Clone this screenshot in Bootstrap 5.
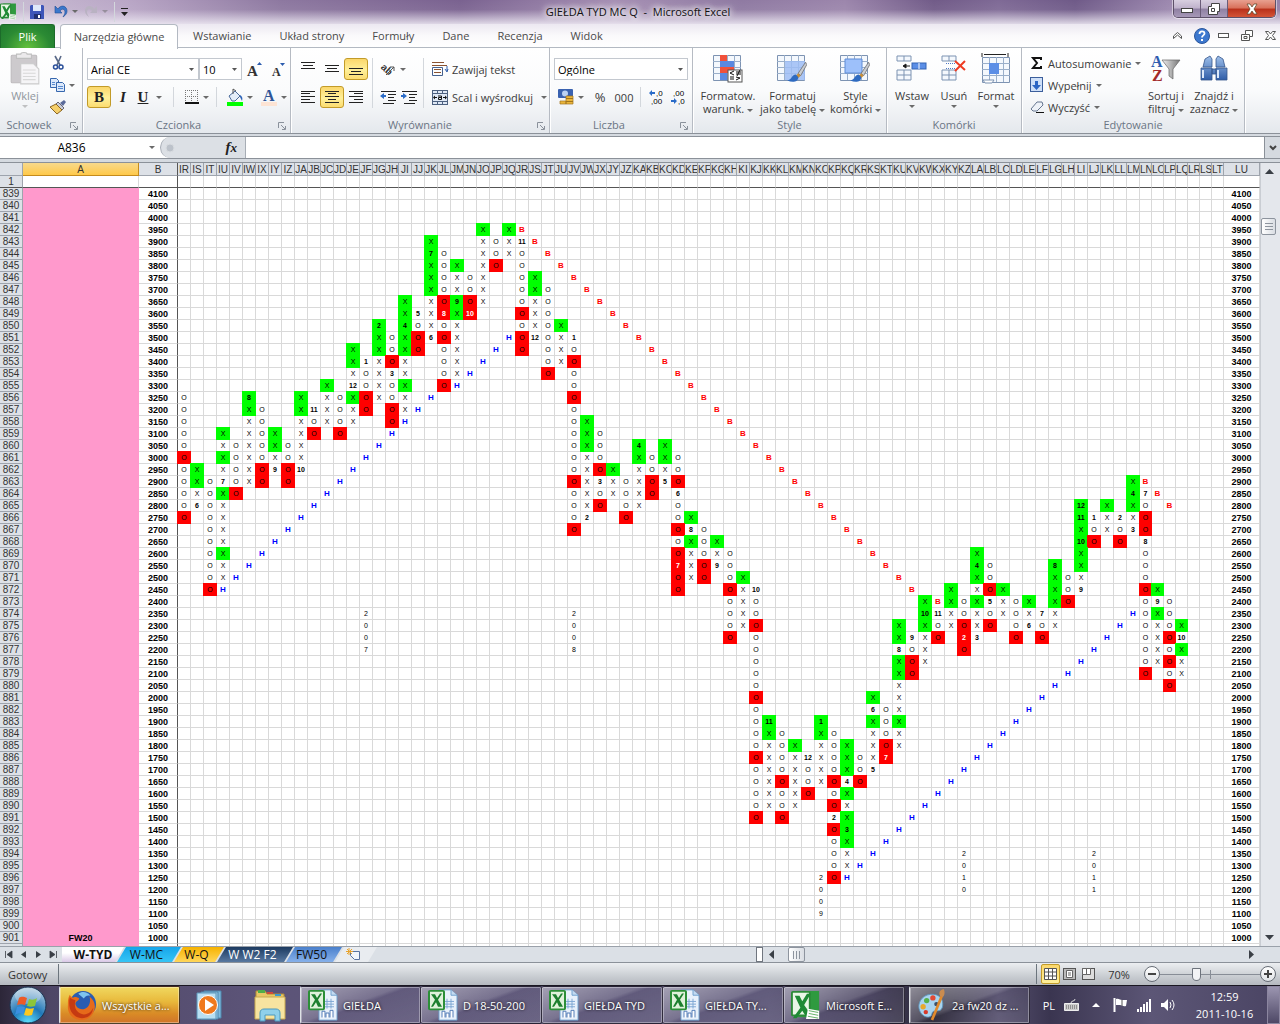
<!DOCTYPE html>
<html lang="pl">
<head>
<meta charset="utf-8">
<meta name="viewport" content="width=device-width, initial-scale=1">
<title>GIEŁDA TYD MC Q - Microsoft Excel</title>
<link href="https://cdn.jsdelivr.net/npm/bootstrap@5.3.0/dist/css/bootstrap.min.css" rel="stylesheet">
<style>
html,body{height:100%}
body{font-family:"Open Sans","Noto Sans",sans-serif;font-size:11px;line-height:13px;color:#3b3b3b;background:#dfe3e8;overflow:hidden}
svg{display:block;flex:none;overflow:visible}
button,select,input{font-family:inherit;font-size:inherit;line-height:inherit;color:inherit}
.xl-app{height:100vh}
/* title bar */
.titlebar{height:24px;background:linear-gradient(180deg,rgba(255,255,255,0) 0,rgba(255,255,255,.05) 40%,rgba(240,236,245,.85) 100%),linear-gradient(90deg,#c9bdd3 0,#b9a6c6 10%,#8d78a0 22%,#7a6290 36%,#a690b4 48%,#8f7aa2 58%,#9c86ac 66%,#715b88 73%,#7f6a96 78%,#6f5a88 84%,#a08cb2 92%,#9480a8 100%)}
.edge{flex-basis:0}
.qat{height:23px;gap:6px}
.titletext{padding-top:5px;color:#111;text-shadow:0 0 6px #fff,0 0 6px #fff,0 0 10px #fff}
.winbtns{border:1px solid #5d5068;border-top:0;border-radius:0 0 5px 5px;overflow:hidden;height:18px;box-shadow:0 0 0 1px rgba(255,255,255,.5)}
.winbtns button{border:0;border-right:1px solid #6a5c78;height:18px;width:27px;padding:0;background:linear-gradient(180deg,#d8cfe0 0,#bfb2cb 45%,#8f80a2 50%,#a99bba 100%)}
.winbtns .xclose{width:47px;border-right:0;background:linear-gradient(180deg,#e8a090 0,#d8705a 45%,#b8301a 50%,#d8583a 100%)}
/* ribbon tabs */
.tabrow{height:24px;background:linear-gradient(180deg,#ece8f1 0,#faf9fb 50%,#fff 100%);border-bottom:1px solid #b3b9c2}
.tabrow button{border:0;background:transparent;padding:0;color:#4a4a4a}
.tabrow .filetab{width:55px;height:24px;color:#fff;border:1px solid #1c6b2a;border-bottom:0;border-radius:3px 3px 0 0;background:radial-gradient(ellipse at 50% 100%,#64c13d 0,#2b8a34 60%,#1f7a2e 100%)}
.tabrow .hometab{margin-left:5px;width:118px;height:25px;margin-bottom:-1px;border:1px solid #b3b9c2;border-bottom:0;border-radius:4px 4px 0 0;background:#fff}
.tabnames{gap:28px;padding-left:15px}
/* ribbon */
.ribbon{height:86px;background:linear-gradient(180deg,#fff 0,#fafbfc 50%,#e9ecf0 90%,#e4e8ed 100%);border-bottom:1px solid #8b9199}
.grp{border-right:1px solid #b6bbc3;box-shadow:1px 0 0 #fff;height:85px;flex:none}
.grp-name{height:15px;color:#6b7584;text-align:center;position:relative;line-height:13px}
.corner{position:absolute;right:4px;top:4px;width:8px;height:8px}
.rb{border:0;background:transparent;padding:0;display:inline-flex;align-items:center;justify-content:center;height:22px;gap:4px;white-space:nowrap;border-radius:3px;flex:none}
.rb.on{border:1px solid #c29b29;background:linear-gradient(180deg,#fbd76b,#fff09a 55%,#fbdc70)}
.w16{width:16px}.w21{width:21px}.w24{width:24px}.w30{width:30px}
.serifb{font:bold 15px "Liberation Serif",serif;color:#222}
.vsep{width:1px;height:20px;background:#d3d7dc;flex:none}
.vsep.tall{height:50px}
.dn{width:0;height:0;border:3px solid transparent;border-top-color:#6a6a6a;border-bottom:0;flex:none;display:inline-block;vertical-align:middle}
.combo{appearance:none;border:1px solid #c3c8cf;border-radius:0;height:22px;padding:0 3px;color:#000;background:url("data:image/svg+xml,%3Csvg xmlns='http://www.w3.org/2000/svg' width='5' height='3'%3E%3Cpath d='M0 0h5L2.5 3z' fill='%23555'/%3E%3C/svg%3E") right 4px center no-repeat,#fff}
.big{border:0;background:transparent;padding:0;display:flex;flex-direction:column;align-items:center;text-align:center;gap:3px;flex:none;white-space:nowrap}
.big svg{height:34px}
.ctl{gap:6px;padding:10px 0 0 4px}
/* formula bar */
.fbar{height:28px;padding-top:2px;background:#d5dae0}
.fbar>div{height:23px;border-top:1px solid #8b9199;border-bottom:1px solid #8b9199;background:#fff}
.namebox{border:0;width:143px;text-align:center;font-size:12px;color:#000;background:#fff;padding:0}
.fxzone{width:86px;background:#dce0e5;border:1px solid #a7adb5;border-width:0 1px;border-radius:11px 0 0 11px}
.fxin{border:0;outline:0;background:#fff;min-width:0}
/* sheet */
.sheetwrap{min-height:0;overflow:hidden;border-top:1px solid #8b9199;background:#fff}
.sheetbox{min-width:0;overflow:hidden}
.cells{table-layout:fixed;width:100%;border-collapse:separate;border-spacing:0;font-family:"Liberation Sans",Arial,sans-serif;color:#000}
.cells tr{height:12px}
.cells th,.cells td{height:12px;padding:1px 0 0;border:0 solid #d9d9d9;border-width:0 1px 1px 0;overflow:hidden;white-space:nowrap;text-align:center;font-size:7px;line-height:10px;vertical-align:middle}
.cells thead th{font-size:10px;font-weight:400;height:13px;line-height:11px;color:#333;background:#dde1e7;border-color:#9ea4ad}
.cells th.pick{background:linear-gradient(180deg,#f8d98c,#ffc94a);border-color:#c58b1c}
.cells tbody th{font-size:10px;font-weight:400;color:#333;background:#dde1e7;border-color:#9ea4ad}
.cells .frz td,.cells .frz th{border-bottom-color:#555}
.cells .cb{border-right-color:#555}
.cells td.price{font-size:9px;font-weight:700}
.cells td.pinkcol{background:#ff99cc;border-color:#ff99cc;font-size:9px;font-weight:700}
.cells td.up{background:#0f0;border-color:#0f0;box-shadow:-1px -1px 0 #0f0,-1px 0 0 #0f0,0 -1px 0 #0f0}
.cells td.down{background:#f00;border-color:#f00;box-shadow:-1px -1px 0 #f00,-1px 0 0 #f00,0 -1px 0 #f00}
.cells td.num{font-weight:700}
.cells td.down.num{color:#fff}
.cells td.lineB{color:#f00;font-weight:700;font-size:8px}
.cells td.lineH{color:#00f;font-weight:700;font-size:8px}
.vscroll{width:20px;background:#e4e7ec;border-left:1px solid #c9cdd3;flex:none;padding-right:4px}
.vgap{height:38px}
.sbtn{border:0;background:transparent;padding:0;display:flex;align-items:center;justify-content:center;flex:none}
.sq{width:17px;height:17px}
.thumb{border:1px solid #8d949e;border-radius:2px;background:linear-gradient(90deg,#fff,#d9dde3);padding:0;display:flex;align-items:center;justify-content:center;flex:none}
/* sheet tabs */
.botrow{height:17px;background:#dbe0e6;border-top:1px solid #9aa1aa;flex:none;border-bottom:1px solid #8b9199}
.tabnav{width:62px;padding:0 5px}
.stab{border:0;height:15px;padding:0 5px 0 0;font-size:12px;line-height:15px;color:#111;margin-left:-7px;clip-path:polygon(9px 0,100% 0,calc(100% - 9px) 100%,0 100%);flex:none}
.stab.cur{width:62px;margin-left:0;padding:0;clip-path:polygon(0 0,100% 0,calc(100% - 9px) 100%,0 100%);background:linear-gradient(180deg,#fff 40%,#d9c8e6)}
.t-mc{width:64px;background:linear-gradient(180deg,#16a5ea,#35c5f5)}
.t-q{width:50px;background:linear-gradient(180deg,#f6b200,#ffd65a)}
.t-w2{width:76px;background:linear-gradient(180deg,#1c3a60,#5878a0)}
.t-fw{width:56px;background:linear-gradient(180deg,#4a80cc,#86b0ea)}
.t-new{width:42px;background:#e9ecf0}
.hscroll{width:524px;padding-right:20px}
.splitter{width:7px;height:15px;border:1px solid #70767f;background:#fff}
/* status bar */
.status{height:22px;background:linear-gradient(180deg,#eceef1,#c9cdd2 60%,#b5b9bf);flex:none;color:#333}
.ready{width:58px}
.vbtn{border:0;background:transparent;width:19px;height:20px;padding:0;display:flex;align-items:center;justify-content:center}
.vbtn.on{border:1px solid #c29b29;border-radius:2px;background:linear-gradient(180deg,#fbd76b,#fff09a)}
.pct{width:42px}
.round{width:16px;height:16px;border-radius:8px;border:1px solid #666c75;background:linear-gradient(180deg,#fff,#dfe2e6);padding:0;display:flex;align-items:center;justify-content:center;flex:none}
.zoomer{appearance:none;width:100px;height:16px;background:linear-gradient(#878d96,#878d96) center/100% 1px no-repeat,linear-gradient(#878d96,#878d96) 50% center/1px 9px no-repeat;margin:0}
.zoomer::-webkit-slider-thumb{appearance:none;width:9px;height:13px;border:1px solid #6d737c;background:#f2f3f5;border-radius:1px 1px 5px 5px}
/* taskbar */
.taskbar{height:39px;flex:none;border-top:1px solid #1a1722;color:#fff;background:linear-gradient(90deg,#2c2638 0,#4e4666 4%,#5c5478 20%,#5b5577 60%,#453f5c 68%,#2b2838 73%,#57516f 78%,#3a3550 82%,#5c5676 90%,#4a4463 100%)}
.task{width:121px;height:38px;border:1px solid rgba(20,16,30,.75);border-left-width:0;border-radius:2px;box-shadow:inset 0 0 0 1px rgba(255,255,255,.35);background:linear-gradient(160deg,rgba(255,255,255,.45) 0,rgba(255,255,255,.18) 45%,rgba(255,255,255,.04) 50%,rgba(255,255,255,.1) 100%);color:#fff;padding:0 4px 0 7px;display:flex;align-items:center;gap:5px;white-space:nowrap;overflow:hidden;flex:none}
.task svg{width:30px;height:32px}
.task span{text-shadow:0 0 3px #000}
.task.fox{background:linear-gradient(180deg,#f0d860 0,#e8b93c 40%,#d98a26 75%,#d0742a 100%)}
.quick{border:0;background:transparent;padding:0;display:flex;align-items:center;justify-content:center;width:60px;flex:none}
.quick.orb{width:55px}
.tray{gap:9px;padding-right:12px}
.clock{width:73px;line-height:17px;margin-right:6px}
.desk{width:13px;height:38px;border:1px solid #8c86a0;background:linear-gradient(180deg,#9b95b0,#4e4866);padding:0;flex:none}
</style>
<script src="https://cdn.jsdelivr.net/npm/bootstrap@5.3.0/dist/js/bootstrap.bundle.min.js"></script>
</head>
<body>
<svg width="0" height="0" class="position-absolute" aria-hidden="true">
 <defs>
  <linearGradient id="gNavy" x1="0" y1="0" x2="0" y2="1"><stop offset="0" stop-color="#9fc0ea"/><stop offset="1" stop-color="#2f5da8"/></linearGradient>
  <linearGradient id="gSteel"><stop offset="0" stop-color="#eee"/><stop offset="1" stop-color="#777"/></linearGradient>
  <radialGradient id="gOrb" cx=".5" cy="1" r="1"><stop offset="0" stop-color="#5fe3ff"/><stop offset=".45" stop-color="#1f78b8"/><stop offset="1" stop-color="#b8cfe2"/></radialGradient>
  <symbol id="xlbig" viewBox="0 0 32 32"><rect x="6" y="1" width="24" height="28" fill="#2f9a3f"/><rect x="1" y="2" width="19" height="25" rx="1" fill="#e9f6e6" stroke="#2c8a38" stroke-width="2"/><path d="M4 6h5l3 6 5-8h4l-7 12 10 14h-7l-5-8-6 8H2l8-11z" fill="#1f8a35"/><path d="M18 20l12 2v9H16z" fill="#fff"/><path d="M19 22l10 2M19 25l10 2M18 28l11 2" stroke="#5fae62"/></symbol>
  <symbol id="xldoc" viewBox="0 0 30 36" preserveAspectRatio="none"><path d="M11 1h12l6 6v28H11z" fill="#e8f1fb" stroke="#6d9fce"/><path d="M23 1v6h6" fill="#c4daf0" stroke="#6d9fce"/><path d="M15 14h11M15 17h11M15 20h11M19 11v11M23 11v11" stroke="#7ba6d2"/><path d="M14 32V25h3v7M18 32v-5h3v5M22 32v-8h3v8" stroke="#4a76b4" fill="#fff"/><rect x="1" y="2" width="15" height="21" rx="1" fill="#dff2da" stroke="#2c8f38" stroke-width="2"/><path d="M3 6h4l2 4 3-5h2l-4 7 4 8h-4l-2-5-3 5H3l4-8z" fill="#1c7f2e"/></symbol>
  <symbol id="brush" viewBox="0 0 16 18"><path d="M15 1l-6 9 2 2 5-9z" fill="#c8ccd2" stroke="#666"  stroke-width=".6"/><path d="M9 10l2 2-2 2-2-2z" fill="#c9903a"/><path d="M7 11c-3 0-3 4-7 5 5 2 9 1 9-3z" fill="#2e6ac0"/></symbol>
  <symbol id="grid28" viewBox="0 0 28 28"><path d="M.5.5h27v25H.5z" fill="#f4f8fd" stroke="#7d93b2"/><path d="M7.500 0v25M14.500 0v25M21.500 0v25M0 6.500h28M0 12.500h28M0 18.500h28" stroke="#9aafca" fill="none"/></symbol>
 </defs>
</svg>
<div class="xl-app d-flex flex-column">
 <header>
  <div class="titlebar d-flex align-items-start">
   <div class="qat d-flex align-items-center flex-grow-1 edge">
    <svg width="17" height="17" viewBox="0 0 32 32" aria-label="Excel"><use href="#xlbig"/></svg>
    <span class="vsep"></span>
    <button class="sbtn" aria-label="Zapisz"><svg width="14" height="14" viewBox="0 0 14 14"><path d="M1 0h12l1 1v13H0V1z" fill="#3d55b8"/><path d="M3 0h8v6H3z" fill="#dfe8fa"/><path d="M4 9h7v5H4z" fill="#1f2f70"/><path d="M8 10h2v3H8z" fill="#fff"/></svg></button>
    <button class="sbtn gap-1 ms-1" aria-label="Cofnij"><svg width="14" height="13" viewBox="0 0 14 13"><path d="M1 1v7h7L6 6c2-3 5-2 5 1 0 2-1 3-2 5 3-2 4-4 4-6C13 1 7-1 4 4z" fill="#3b78cc" stroke="#1e4c94" stroke-width=".6"/></svg><i class="dn"></i></button>
    <button class="sbtn gap-1" aria-label="Ponów"><svg width="14" height="13" viewBox="0 0 14 13"><path d="M13 1v7H6l2-2C6 3 3 4 3 7c0 2 1 3 2 5C2 10 1 8 1 6c0-5 6-7 9-2z" fill="#b9b2c2"/></svg><i class="dn opacity-50"></i></button>
    <span class="vsep"></span>
    <svg width="7" height="8" viewBox="0 0 7 8" aria-hidden="true"><path d="M0 .5h7" stroke="#222"/><path d="M0 4h7L3.500 8z" fill="#222"/></svg>
   </div>
   <div class="titletext">GIEŁDA TYD MC Q &nbsp;-&nbsp; Microsoft Excel</div>
   <div class="d-flex justify-content-end flex-grow-1 pe-1 edge">
    <div class="winbtns d-flex">
     <button aria-label="Minimalizuj"><svg class="mx-auto" width="12" height="8"><rect x=".5" y="3.500" width="11" height="4" fill="#fff" stroke="#444"/></svg></button>
     <button aria-label="Przywróć"><svg class="mx-auto" width="12" height="12"><path d="M3.500.5h8v8h-2v3h-9v-8h3z" fill="#fff" stroke="#444"/><path d="M3.500 5.500h3v3h-3z" fill="none" stroke="#444"/></svg></button>
     <button class="xclose" aria-label="Zamknij"><svg class="mx-auto" width="12" height="10"><path d="M1 0h3l2 3 2-3h3L8 5l3 5H8L6 7l-2 3H1l3-5z" fill="#fff" stroke="#542" stroke-width=".7"/></svg></button>
    </div>
   </div>
  </div>
  <nav class="tabrow d-flex align-items-center">
   <button class="filetab">Plik</button>
   <button class="hometab">Narzędzia główne</button>
   <div class="tabnames d-flex flex-grow-1">
    <button>Wstawianie</button><button>Układ strony</button><button>Formuły</button><button>Dane</button><button>Recenzja</button><button>Widok</button>
   </div>
   <div class="d-flex align-items-center pe-1 gap-2">
    <button class="sbtn me-1" aria-label="Minimalizuj wstążkę"><svg width="9" height="7" viewBox="0 0 9 7"><path d="M.5 4L4.500.500 8.500 4v2.500L4.500 3 .5 6.500z" fill="#fff" stroke="#555"/></svg></button>
    <button class="sbtn" aria-label="Pomoc"><svg width="16" height="16" viewBox="0 0 16 16"><circle cx="8" cy="8" r="7.500" fill="#3d78cf" stroke="#2b569c"/><path d="M5.500 6c0-3.500 5-3.500 5-.5 0 2-2.500 1.800-2.500 4" fill="none" stroke="#fff" stroke-width="1.800"/><rect x="7" y="11" width="2" height="2" fill="#fff"/></svg></button>
    <button class="sbtn me-1" aria-label="Minimalizuj okno"><svg width="11" height="5"><rect x=".5" y=".5" width="10" height="4" fill="#fff" stroke="#555"/></svg></button>
    <button class="sbtn me-1" aria-label="Przywróć okno"><svg width="12" height="11"><path d="M4.500.5h7v6h-3v4h-8v-6h4z" fill="#fff" stroke="#555"/><path d="M4.500 4.500h4v2M3 6.500h3v2H3z" fill="none" stroke="#555"/></svg></button>
    <button class="sbtn" aria-label="Zamknij okno"><svg width="11" height="9"><path d="M.5.5h3l2 2.500 2-2.500h3L7.500 4.500l3 4h-3l-2-2.500-2 2.500h-3l3-4z" fill="#fff" stroke="#555"/></svg></button>
   </div>
  </nav>
  <div class="ribbon d-flex">
   <section class="grp d-flex flex-column" style="width:83px">
    <div class="d-flex flex-grow-1 ps-1">
     <button class="big text-secondary opacity-75 pt-1" style="width:42px"><svg width="30" height="34" viewBox="0 0 28 32"><rect x="1" y="3" width="24" height="26" rx="1" fill="#bdb9bd" stroke="#a9a5a9"/><path d="M6 2h4c0-2 6-2 6 0h4v4H6z" fill="#e6e4e6" stroke="#aaa"/><path d="M10 11h12l5 5v14H10z" fill="#f4f3f5" stroke="#bbb"/><path d="M12 17h12M12 20h12M12 23h12M12 26h12" stroke="#ccc"/></svg><span>Wklej</span><i class="dn opacity-50"></i></button>
     <div class="d-flex flex-column ps-1 pt-1">
      <button class="rb w16" aria-label="Wytnij"><svg width="11" height="15" viewBox="0 0 11 15"><path d="M2 0l5 9M8 0L4 9" stroke="#5a6a88" stroke-width="1.600"/><circle cx="2.500" cy="11" r="2" fill="none" stroke="#2a4f9a" stroke-width="1.500"/><circle cx="8" cy="11" r="2" fill="none" stroke="#2a4f9a" stroke-width="1.500"/></svg></button>
      <button class="rb w24" aria-label="Kopiuj"><svg width="15" height="14" viewBox="0 0 15 14"><path d="M.5.5h6l2 2v7h-8z" fill="#dce9fb" stroke="#3667ae"/><path d="M6.500 4.500h6l2 2v7h-8z" fill="#dce9fb" stroke="#3667ae"/><path d="M8 8.500h5M8 10.500h5M2 4.500h3M2 6.500h3" stroke="#5a8bd0"/></svg><i class="dn"></i></button>
      <button class="rb w16" aria-label="Malarz formatów"><svg width="16" height="14" viewBox="0 0 16 14"><path d="M10 3l4-3 2 2-3 4z" fill="#5a6a9a"/><path d="M8 2l6 6-2 2-6-6z" fill="#c9ccd8" stroke="#667"/><path d="M6 4l6 6-5 4L0 7z" fill="#f5cf6a" stroke="#8a6420"/></svg></button>
     </div>
    </div>
    <div class="grp-name pe-4">Schowek<svg class="corner"><path d="M.5 6V.5H6M3 3l4 4M7.500 4v3.500H4" fill="none" stroke="#8a919b"/></svg></div>
   </section>
   <section class="grp d-flex flex-column" style="width:208px">
    <div class="ctl d-flex flex-column flex-grow-1">
     <div class="d-flex align-items-center"><select class="combo" aria-label="Czcionka" style="width:112px"><option>Arial CE</option></select><select class="combo" aria-label="Rozmiar" style="width:43px"><option>10</option></select>
      <button class="rb w24" aria-label="Zwiększ rozmiar"><svg width="15" height="15" viewBox="0 0 15 15"><text x="0" y="14" font-family="Liberation Serif" font-weight="700" font-size="15" fill="#333">A</text><path d="M10 3l2.500-3L15 3z" fill="#2b5cae"/></svg></button>
      <button class="rb w24" aria-label="Zmniejsz rozmiar"><svg width="13" height="15" viewBox="0 0 13 15"><text x="0" y="14" font-family="Liberation Serif" font-weight="700" font-size="12" fill="#333">A</text><path d="M8 1l2.500 3L13 1z" fill="#2b5cae"/></svg></button></div>
     <div class="d-flex align-items-center"><button class="rb on w24 serifb" aria-label="Pogrubienie">B</button><button class="rb w24 serifb fst-italic" aria-label="Kursywa">I</button><button class="rb w30 serifb" aria-label="Podkreślenie"><u>U</u><i class="dn ms-1"></i></button>
      <span class="vsep mx-2"></span><button class="rb w30" aria-label="Obramowanie"><svg width="14" height="14"><path d="M.5 0v12M6.500 0v12M12.500 0v12M0 .5h13M0 6.500h13" stroke="#777" stroke-dasharray="1 1"/><path d="M0 13h14" stroke="#111" stroke-width="2"/></svg><i class="dn"></i></button>
      <span class="vsep mx-1"></span><button class="rb w30 ms-1" aria-label="Kolor wypełnienia"><svg width="16" height="17" viewBox="0 0 16 17"><path d="M2 7l6-5 5 5-5 5H5z" fill="#e4edf8" stroke="#4a6a9a"/><path d="M6 5V0l3 2" fill="none" stroke="#555"/><path d="M13 6c2 1 3 3 2 6l-2-4z" fill="#2e64b8"/><path d="M0 13h16v4H0z" fill="#0f0"/></svg><i class="dn"></i></button>
      <button class="rb w30 ms-1" aria-label="Kolor czcionki"><svg width="16" height="17" viewBox="0 0 16 17"><text x="2" y="12" font-family="Liberation Serif" font-weight="700" font-size="16" fill="#2f5597">A</text><path d="M0 13h16v4H0z" fill="#fde4d4"/></svg><i class="dn"></i></button></div>
    </div>
    <div class="grp-name pe-3">Czcionka<svg class="corner"><path d="M.5 6V.5H6M3 3l4 4M7.500 4v3.500H4" fill="none" stroke="#8a919b"/></svg></div>
   </section>
   <section class="grp d-flex flex-column" style="width:259px">
    <div class="d-flex flex-grow-1" style="padding:10px 0 0 5px">
     <div class="d-flex flex-column" style="gap:6px">
      <div class="d-flex"><button class="rb w24" aria-label="Do góry"><svg width="14" height="14"><path d="M0 .5h14M2 3.500h10M0 6.500h14" stroke="#222"/></svg></button><button class="rb w24" aria-label="Do środka"><svg width="14" height="14"><path d="M0 3.500h14M2 6.500h10M0 9.500h14" stroke="#222"/></svg></button><button class="rb on w24" aria-label="Do dołu"><svg width="14" height="14"><path d="M0 6.500h14M2 9.500h10M0 12.500h14" stroke="#222"/></svg></button></div>
      <div class="d-flex"><button class="rb w24" aria-label="Do lewej"><svg width="14" height="14"><path d="M0 1.500h14M0 3.500h9M0 6.500h14M0 9.500h9M0 12.500h14" stroke="#222"/></svg></button><button class="rb on w24" aria-label="Wyśrodkuj"><svg width="14" height="14"><path d="M0 1.500h14M3 3.500h8M0 6.500h14M3 9.500h8M0 12.500h14" stroke="#222"/></svg></button><button class="rb w24" aria-label="Do prawej"><svg width="14" height="14"><path d="M0 1.500h14M5 3.500h9M0 6.500h14M5 9.500h9M0 12.500h14" stroke="#222"/></svg></button></div>
     </div>
     <span class="vsep tall mx-1"></span>
     <div class="d-flex flex-column" style="gap:6px">
      <button class="rb w30" aria-label="Orientacja"><svg width="17" height="16" viewBox="0 0 17 16"><text x="1" y="10" transform="rotate(42 5 9)" font-family="Liberation Sans" font-size="10" font-weight="700" fill="#333">ab</text><path d="M7 14L15 6M15 10V6h-4" stroke="#555" fill="none"/></svg><i class="dn"></i></button>
      <div class="d-flex"><button class="rb w21" aria-label="Zmniejsz wcięcie"><svg width="16" height="14"><path d="M1 1.500h15M8 4.500h8M8 7.500h6M8 10.500h8M3 13.500h11" stroke="#222"/><path d="M0 6l4-3v2h2v2H4v2z" fill="#2b6cc8"/></svg></button><button class="rb w21" aria-label="Zwiększ wcięcie"><svg width="16" height="14"><path d="M1 1.500h15M8 4.500h8M8 7.500h6M8 10.500h8M3 13.500h11" stroke="#222"/><path d="M6 6L2 3v2H0v2h2v2z" fill="#2b6cc8"/></svg></button></div>
     </div>
     <span class="vsep tall ms-1 me-2"></span>
     <div class="d-flex flex-column align-items-start" style="gap:6px">
      <button class="rb"><svg width="16" height="16"><path d="M0 1.500h12M0 4.500h15M2 8.500h7M2 11.500h7" stroke="#8a5230"/><path d="M.5 6.500h10v8H.5z" fill="none" stroke="#44618f"/><path d="M15 5v5M13 8l2 3 1-3" stroke="#2f5fae" fill="none"/></svg>Zawijaj tekst</button>
      <button class="rb"><svg width="16" height="15"><rect x=".5" y=".5" width="15" height="14" fill="#dfe8f5" stroke="#4c607f"/><path d="M5.500 0v4M10.500 0v4M5.500 11v4M10.500 11v4M0 3.500h16M0 11.500h16" stroke="#4c607f"/><path d="M1 7.500l2-2v4zM15 7.500l-2-2v4z" fill="#111"/><path d="M3 7.500h2M11 7.500h2M6 6h3.500v3.500H6.500v-2h3" fill="none" stroke="#111"/></svg>Scal i wyśrodkuj<i class="dn ms-1"></i></button>
     </div>
    </div>
    <div class="grp-name">Wyrównanie<svg class="corner"><path d="M.5 6V.5H6M3 3l4 4M7.500 4v3.500H4" fill="none" stroke="#8a919b"/></svg></div>
   </section>
   <section class="grp d-flex flex-column" style="width:143px">
    <div class="ctl d-flex flex-column flex-grow-1">
     <select class="combo ms-px" aria-label="Format liczb" style="width:134px"><option>Ogólne</option></select>
     <div class="d-flex align-items-center ps-1"><button class="rb" aria-label="Walutowy"><svg width="16" height="16"><rect width="15" height="9" rx="1" fill="#3a62b0"/><circle cx="7" cy="4.500" r="3" fill="#bcd2f4"/><path d="M8 7h7v8H8zM2 12h6v3H2z" fill="#eab53c" stroke="#a0741c" stroke-width=".7"/><path d="M8 9.500h7M8 12.500h7" stroke="#a0741c"/></svg><i class="dn"></i></button><button class="rb w24 ms-1" aria-label="Procentowy" style="font-size:13px">%</button><button class="rb w24" aria-label="Dziesiętny">000</button><span class="vsep ms-1"></span>
      <button class="rb w24 ms-1" aria-label="Zwiększ dziesiętne"><svg width="17" height="16"><text x="7" y="7" font-size="8" font-family="Liberation Sans">,0</text><text x="2" y="15" font-size="8" font-family="Liberation Sans">,00</text><path d="M0 4l3-3v2h3v2H3v2z" fill="#2b6cc8"/></svg></button><button class="rb w21" aria-label="Zmniejsz dziesiętne"><svg width="17" height="16"><text x="2" y="7" font-size="8" font-family="Liberation Sans">,00</text><text x="7" y="15" font-size="8" font-family="Liberation Sans">,0</text><path d="M6 12L3 9v2H0v2h3v2z" fill="#2b6cc8"/></svg></button></div>
    </div>
    <div class="grp-name pe-4">Liczba<svg class="corner"><path d="M.5 6V.5H6M3 3l4 4M7.500 4v3.500H4" fill="none" stroke="#8a919b"/></svg></div>
   </section>
   <section class="grp d-flex flex-column" style="width:194px">
    <div class="d-flex flex-grow-1 ps-1 pt-1">
     <button class="big" style="width:62px"><svg width="30" viewBox="0 0 30 32"><use href="#grid28" width="28" height="28" y="2"/><path d="M7 2h7v6H7zM7 14h14v6H7z" fill="#f0513a"/><path d="M7 8h14v6H7zM7 20h7v7H7z" fill="#5a88e0"/><rect x="15" y="17" width="14" height="12" fill="#fff" stroke="#555"/><path d="M21 18l-4 2 4 2M17 24h4M23 19h5M23 21h5M27 17l-3 6M23 24l4 1-4 2M17 26h4" stroke="#111" fill="none"/></svg><span>Formatow.<br>warunk. <i class="dn"></i></span></button>
     <button class="big" style="width:67px"><svg width="32" viewBox="0 0 32 32"><use href="#grid28" width="28" height="28" y="2"/><path d="M8 8h20v19H8z" fill="#9dbdf4" opacity=".85"/><use href="#brush" x="10" y="8" width="20" height="22"/></svg><span>Formatuj<br>jako tabelę <i class="dn"></i></span></button>
     <button class="big" style="width:59px"><svg width="32" viewBox="0 0 32 32"><use href="#grid28" width="28" height="28" y="2"/><path d="M5 6h17v14H5z" fill="#9dc0fa" stroke="#5f8cd6"/><use href="#brush" x="10" y="8" width="20" height="22"/></svg><span>Style<br>komórki <i class="dn"></i></span></button>
    </div>
    <div class="grp-name">Style</div>
   </section>
   <section class="grp d-flex flex-column" style="width:135px">
    <div class="d-flex flex-grow-1 ps-1 pt-1">
     <button class="big" style="width:42px"><svg width="32" viewBox="0 0 32 32"><path d="M1 3h14v5H1zM8 3v5M1 17h14v10H1zM8 17v10M1 22h14" fill="#f4f8fd" stroke="#7d93b2"/><rect x="16" y="10" width="14" height="6" fill="#5b8ee6" stroke="#3565b4"/><path d="M23 10v6" stroke="#fff"/><path d="M14 13H8M10 11l-3 2 3 2z" stroke="#222"/></svg><span>Wstaw</span><i class="dn"></i></button>
     <button class="big" style="width:42px"><svg width="26" viewBox="0 0 26 32"><path d="M1 3h14v5H1zM8 3v5M1 17h14v10H1zM8 17v10M1 22h14" fill="#f4f8fd" stroke="#7d93b2"/><path d="M5 10.500h9M5 15.500h9" stroke="#4f78c4" stroke-dasharray="1 1"/><path d="M14 8l10 9M24 8L14 18" stroke="#ee3b22" stroke-width="2"/></svg><span>Usuń</span><i class="dn"></i></button>
     <button class="big" style="width:42px"><svg width="32" viewBox="0 0 32 32"><use href="#grid28" width="30" height="28" x="1" y="4"/><rect x="9" y="10" width="10" height="11" fill="#5b8ee6"/><path d="M4 1.500h22M2 0v4M28 0v4" stroke="#222"/><path d="M3 27h11l-2 3H5z" fill="#fff" stroke="#7d93b2"/></svg><span>Format</span><i class="dn"></i></button>
    </div>
    <div class="grp-name">Komórki</div>
   </section>
   <section class="grp d-flex flex-column" style="width:223px">
    <div class="d-flex flex-grow-1">
     <div class="d-flex flex-column align-items-start ps-2 pt-1" style="width:121px">
      <button class="rb"><svg width="14" height="14"><path d="M11 4V2H3l4 5-4 5h8v-2" fill="none" stroke="#111" stroke-width="2"/></svg>Autosumowanie<i class="dn"></i></button>
      <button class="rb"><svg width="14" height="16"><rect x=".5" y=".5" width="12" height="14" fill="#cfe0f8" stroke="#3c5f9c"/><path d="M5 4h3v4h3l-4.500 5L2 8h3z" fill="#2c66c4"/></svg>Wypełnij<i class="dn"></i></button>
      <button class="rb"><svg width="14" height="12"><path d="M1 8l6-7h5l1 3-6 6H3z" fill="#eef2f8" stroke="#667690"/><path d="M6 11.500h8" stroke="#111"/></svg>Wyczyść<i class="dn"></i></button>
     </div>
     <button class="big pt-1" style="width:46px"><svg width="30" viewBox="0 0 30 32"><text x="0" y="14" font-family="Liberation Serif" font-weight="700" font-size="16" fill="#2f5db0">A</text><text x="1" y="28" font-family="Liberation Serif" font-weight="700" font-size="16" fill="#a32a2a">Z</text><path d="M11 7h18l-7 9v10l-4-3v-7z" fill="url(#gSteel)" stroke="#666" stroke-width=".7"/></svg><span>Sortuj i<br>filtruj <i class="dn"></i></span></button>
     <button class="big pt-1" style="width:50px"><svg width="28" viewBox="0 0 28 32"><path d="M5 6l5-3 2 3v8H3zM16 6l2-3 5 3 2 8h-9zM1 15h11v12H1zM16 15h11v12H16zM12 16h4v5h-4z" fill="url(#gNavy)" stroke="#35558c" stroke-width=".8"/><path d="M3 17v8M18 17v8" stroke="#dbe8fa" stroke-width="2"/></svg><span>Znajdź i<br>zaznacz <i class="dn"></i></span></button>
    </div>
    <div class="grp-name">Edytowanie</div>
   </section>
  </div>
  <div class="fbar"><div class="d-flex align-items-stretch">
   <input class="namebox" aria-label="Pole nazwy" value="A836">
   <button class="sbtn sq bg-white h-100" aria-label="Lista nazw"><i class="dn"></i></button>
   <div class="fxzone d-flex align-items-center justify-content-between px-1"><svg width="10" height="10"><circle cx="5" cy="5" r="4" fill="#bcc2ca" stroke="#d8dce0"/></svg><button class="sbtn me-1 serifb fst-italic" aria-label="Wstaw funkcję">f<small>x</small></button></div>
   <input class="fxin flex-grow-1" aria-label="Pasek formuły">
   <button class="sbtn" aria-label="Rozwiń pasek" style="width:16px;background:#d5dae0;border-left:1px solid #8b9199"><svg width="8" height="6"><path d="M1 1l3 3 3-3" fill="none" stroke="#444" stroke-width="2"/></svg></button>
  </div></div>
 </header>
 <main class="d-flex flex-grow-1 sheetwrap">
  <div class="flex-grow-1 sheetbox"><table class="cells" id="sheet"></table></div>
  <div class="vscroll d-flex flex-column">
   <button class="sbtn sq" aria-label="W górę"><svg width="9" height="5"><path d="M0 5l4.500-5L9 5z" fill="#3a3f46"/></svg></button>
   <div class="vgap"></div>
   <button class="thumb sq w-100" aria-label="Suwak pionowy"><svg width="8" height="8"><path d="M0 .5h8M0 3.500h8M0 6.500h8" stroke="#8d949e"/></svg></button>
   <div class="flex-grow-1"></div>
   <button class="sbtn sq" aria-label="W dół"><svg width="9" height="5"><path d="M0 0h9L4.500 5z" fill="#3a3f46"/></svg></button>
  </div>
 </main>
 <div class="botrow d-flex">
  <div class="tabnav d-flex align-items-center justify-content-between">
   <button class="sbtn" aria-label="Pierwszy arkusz"><svg width="7" height="7"><path d="M.5 0v7M7 0v7L2 3.500z" stroke="#3a3f46" stroke-width=".8" fill="#3a3f46"/></svg></button>
   <button class="sbtn" aria-label="Poprzedni arkusz"><svg width="5" height="7"><path d="M5 0v7L0 3.500z" fill="#3a3f46"/></svg></button>
   <button class="sbtn" aria-label="Następny arkusz"><svg width="5" height="7"><path d="M0 0v7l5-3.500z" fill="#3a3f46"/></svg></button>
   <button class="sbtn" aria-label="Ostatni arkusz"><svg width="7" height="7"><path d="M6.500 0v7M0 0v7l5-3.500z" stroke="#3a3f46" stroke-width=".8" fill="#3a3f46"/></svg></button>
  </div>
  <button class="stab cur fw-bold">W-TYD</button>
  <button class="stab t-mc">W-MC</button>
  <button class="stab t-q">W-Q</button>
  <button class="stab t-w2 text-white">W W2 F2</button>
  <button class="stab t-fw">FW50</button>
  <button class="stab t-new d-flex align-items-center justify-content-center" aria-label="Wstaw arkusz"><svg width="15" height="13"><path d="M4.500 3.500h9v8h-5l-4-4z" fill="#f2f6fb" stroke="#5a74a0"/><path d="M3 0v7M0 3.500h7M1 1l5 5M6 1L1 6" stroke="#e8a32c"/></svg></button>
  <div class="flex-grow-1"></div>
  <div class="hscroll d-flex align-items-center">
   <span class="splitter"></span>
   <button class="sbtn sq me-2" aria-label="W lewo"><svg width="5" height="9"><path d="M5 0v9L0 4.500z" fill="#3a3f46"/></svg></button>
   <button class="thumb sq h-100" aria-label="Suwak poziomy"><svg width="8" height="8"><path d="M.5 0v8M3.500 0v8M6.500 0v8" stroke="#8d949e"/></svg></button>
   <div class="flex-grow-1"></div>
   <button class="sbtn sq" aria-label="W prawo"><svg width="5" height="9"><path d="M0 0v9l5-4.500z" fill="#3a3f46"/></svg></button>
  </div>
 </div>
 <footer class="status d-flex align-items-center">
  <span class="ready ps-2">Gotowy</span><span class="vsep bg-secondary"></span>
  <div class="flex-grow-1"></div>
  <span class="vsep bg-secondary me-1"></span>
  <button class="vbtn on" aria-label="Normalny"><svg width="13" height="12"><path d="M.5.5h12v11H.5zM4.500 0v12M8.500 0v12M0 4h13M0 8h13" fill="#fff" stroke="#555"/></svg></button>
  <button class="vbtn" aria-label="Układ strony"><svg width="13" height="12"><rect x=".5" y=".5" width="12" height="11" fill="#bbb" stroke="#555"/><path d="M3.500 2.500h6v7h-6zM5 5h3M5 7h3" fill="#fff" stroke="#666"/></svg></button>
  <button class="vbtn" aria-label="Podział stron"><svg width="13" height="12"><rect x=".5" y=".5" width="12" height="11" fill="#ddd" stroke="#555"/><path d="M.5.5h4v6h-4zM4.500.5h4v6h-4z" fill="#fff" stroke="#666"/></svg></button>
  <span class="pct text-center">70%</span>
  <button class="round ms-1" aria-label="Pomniejsz"><svg width="8" height="8"><path d="M0 4h8" stroke="#444" stroke-width="2"/></svg></button>
  <input class="zoomer" type="range" aria-label="Powiększenie" min="0" max="100" value="35">
  <button class="round me-1" aria-label="Powiększ"><svg width="8" height="8"><path d="M0 4h8M4 0v8" stroke="#444" stroke-width="2"/></svg></button>
 </footer>
 <nav class="taskbar d-flex align-items-center">
  <button class="quick orb" aria-label="Start"><svg width="38" height="38" viewBox="0 0 38 38"><circle cx="19" cy="19" r="18" fill="url(#gOrb)" stroke="#1a3350"/><ellipse cx="19" cy="10" rx="13" ry="8" fill="#fff" opacity=".28"/><path d="M10 12c3-2 5-1 8 0l-2 7c-3-1-5-1-8 0z" fill="#ec5a28"/><path d="M20 13c3 1 5 1 8-1l-2 8c-3 1-5 1-8 0z" fill="#8cc63a"/><path d="M8 21c3-1 5-1 8 0l-2 7c-3-1-5-1-8 1z" fill="#3a8fe0"/><path d="M17 22c3 1 5 1 8 0l-2 7c-3 1-5 1-8 0z" fill="#fcc81e"/></svg></button>
  <button class="task fox border-start ms-1"><svg viewBox="0 0 32 34"><circle cx="17" cy="16" r="14" fill="#2a5cb0"/><path d="M12 5c4-3 10-2 13 2-4-1-6 1-7 3z" fill="#7fc4ee"/><path d="M3 6c1 2 2 3 4 3 2-1 4 0 6 1-1 3-4 3-4 6 1 5 8 8 13 3 3-3 3-8 2-11 5 4 7 9 5 15-2 6-7 10-13 10C6 33 0 26 1 17c0-5 0-7 2-11z" fill="#e66a1a"/><path d="M3 9c2 2 4 2 6 3-2 8 1 14 9 15 5 0 8-3 10-7-1 8-6 11-12 11C7 31 0 22 3 9z" fill="#c53a12"/></svg><span>Wszystkie a...</span></button>
  <button class="quick" aria-label="Windows Media Player"><svg width="28" height="32" viewBox="0 0 28 32"><path d="M8 2h17v27H8z" fill="#7fb9dd" stroke="#4e87ac"/><path d="M5 3h17v27H5z" fill="#9accea" stroke="#4e87ac"/><path d="M1 4h19v26H1z" fill="#b9dff2" stroke="#5d97bb"/><circle cx="12" cy="16" r="9.500" fill="#f07a1e" stroke="#fff"/><path d="M9 10l9 6-9 6z" fill="#fff"/></svg></button>
  <button class="quick" aria-label="Eksplorator"><svg width="34" height="34" viewBox="0 0 34 34"><path d="M3 3h9l2 3h17v24H3z" fill="#e8c866" stroke="#b08d34"/><path d="M5 2h7v3H5z" fill="#4fae4a"/><path d="M14 4h6v2h-6z" fill="#d04a3a"/><path d="M22 6h6v2h-6z" fill="#3a9ad0"/><path d="M2 9h30v22H2z" fill="#f7e4a0" stroke="#c8a94e"/><path d="M7 33V25c0-3 2-4 4-4h12c2 0 4 1 4 4v8h-5v-6H12v6z" fill="#8fd0ea" stroke="#4b9abf"/></svg></button>
  <button class="task border-start"><svg><use href="#xldoc"/></svg><span>GIEŁDA</span></button>
  <button class="task"><svg><use href="#xldoc"/></svg><span>D 18-50-200</span></button>
  <button class="task"><svg><use href="#xldoc"/></svg><span>GIEŁDA TYD</span></button>
  <button class="task"><svg><use href="#xldoc"/></svg><span>GIEŁDA TY...</span></button>
  <button class="task"><svg><use href="#xlbig"/></svg><span>Microsoft E...</span></button>
  <button class="task border-start ms-1"><svg viewBox="0 0 32 36"><path d="M14 6C4 7-1 17 2 24c2 6 8 9 12 7 3-2 1-5 4-6 4-1 9 1 10-6C29 11 24 5 14 6z" fill="#a9d4ee" stroke="#5d94ba"/><circle cx="10" cy="13" r="3" fill="#56b14a"/><circle cx="17" cy="10" r="3" fill="#e24b36"/><circle cx="6" cy="20" r="3" fill="#e8a82c"/><circle cx="9" cy="26" r="2.500" fill="#d83a2a"/><circle cx="21" cy="17" r="2.500" fill="#3b4f66"/><path d="M27 8L16 35" stroke="#e08a2c" stroke-width="3"/><path d="M25 8c-2-4 0-7 4-8 2 3 1 8-1 9z" fill="#c98c50"/></svg><span>2a fw20 dz ...</span></button>
  <div class="tray d-flex align-items-center justify-content-end flex-grow-1">
   <span>PL</span>
   <svg width="15" height="14"><path d="M.5 5.500h14v7H.5z" fill="#ccc" stroke="#eee"/><path d="M2 8h11M2 10h11" stroke="#555" stroke-dasharray="1 1"/><path d="M7 5c0-3 4-1 4-4" fill="none" stroke="#ddd"/></svg>
   <button class="sbtn px-1" aria-label="Ukryte ikony"><svg width="8" height="4"><path d="M0 4l4-4 4 4z" fill="#fff"/></svg></button>
   <svg width="15" height="16"><path d="M1.500 1v14" stroke="#fff" stroke-width="2"/><path d="M3 2c3-1 4 1 6 1l5 0-1 6c-3 1-4-1-6-1H3z" fill="#fff"/><path d="M9 3v6" stroke="#555"/></svg>
   <svg width="15" height="14"><path d="M1 14v-3M4 14v-5M7 14V6M10 14V4M13 14V1" stroke="#fff" stroke-width="2"/></svg>
   <svg width="15" height="14"><path d="M0 5h3l4-4v12L3 9H0z" fill="#fff"/><path d="M9 4q2 3 0 6M11 2q4 5 0 10" fill="none" stroke="#fff"/></svg>
  </div>
  <div class="clock text-center">12:59<br>2011-10-16</div>
  <button class="desk" aria-label="Pokaż pulpit"></button>
 </nav>
</div>
<script>
// One entry per chart column: "column index|first row|marks from top to bottom".
// x/o = plain mark, X/O = filled mark, a number = month, g/r before it = filled month.
const series = `0|17|o o o o o O o o o o O
1|23|X X x 6
2|24|o o o o o o o o o O
3|20|X x X x 7 X x x x x X x x
4|21|o o o o O
5|17|g8 X x x x x x x
6|18|o o o o o O O
7|20|X X x 9
8|21|o o O O
9|17|X X x x x x 10
10|18|11 o O
11|16|X x x x
12|17|o o o O
13|13|X X x 12 X x x
14|14|1 o o O O
15|11|g2 X X x x x x
16|12|o o O 3 o o O O
17|9|X X g4 X X x x X x x
18|10|5 o O O
19|4|X g7 X X X x x x 6
20|5|o o o o O r8 o O o o o O
21|6|X x x g9 X x x x x x
22|7|o o O r10
23|3|X x x x x x x
24|4|o o O
25|3|X x x
26|4|11 o o o o o O o O O
27|7|X X x x x 12
28|8|o o o o o o o O
29|11|X x x x
30|12|1 o O o o O o o o o o o O o o o O
31|19|X X X x x x x x 2
32|20|o o o O 3 o O
33|23|X x x
34|24|o o o O
35|21|g4 X x x x x
36|22|o o O O
37|21|X X x 5
38|22|o o O 6 o o O o O r7 O O
39|27|X 8 X x x x
40|28|o o o O O
41|29|X x 9
42|30|o o o O o o o O
43|32|X x x x x
44|33|10 o o O o o o o o O o o o o O o o o o O
45|44|g11 X x x x x x x
46|45|o o o o O o o O
47|46|X x x x x x
48|47|12 o o O
49|44|g1 X x x x x
50|45|o o o o O o O 2 O o o o O
51|46|X X X 4 X x X g3 X x x
52|47|o o O
53|42|X 6 X x x x 5
54|43|o o o O r7
55|36|X X 8 X X x x x X x x
56|37|9 o O O
57|34|X g10 X x x x
58|35|11 o O
59|33|X X x x
60|34|o o O r2 O
61|30|X g4 X x X x x 3
62|31|o o O 5 o O
63|33|X x x
64|34|o o o O
65|34|X x 6
66|35|7 o O
67|31|g8 X X X x x
68|32|o o O
69|26|g12 g11 X g10 X X x 9
70|27|1 o O
71|26|X x x
72|27|2 o O
73|24|X g4 X x 3
74|25|7 o O O 8 o o o O o o o o o o O
75|33|X 9 X x x x x
76|34|o o o O o O o O
77|36|X 10 X x x
14|35|y2 y0 y0 y7
30|35|y2 y0 y0 y8
49|57|y2 y0 y0 y9
60|55|y2 y0 y1 y0
70|55|y2 y0 y1 y1`;
const marks = {};
const put = (c, r, t, k) => { marks[r + ',' + c] = [t, k]; };
for (const line of series.split('\n')) {
  const [c, r0, list] = line.split('|');
  list.split(' ').forEach((t, i) => {
    const r = +r0 + i;
    if (t === 'x' || t === 'o') put(c, r, t.toUpperCase(), '');
    else if (t === 'X') put(c, r, 'X', 'up');
    else if (t === 'O') put(c, r, 'O', 'down');
    else if (t[0] === 'g') put(c, r, t.slice(1), 'up num');
    else if (t[0] === 'r') put(c, r, t.slice(1), 'down num');
    else if (t[0] === 'y') put(c, r, t.slice(1), '');
    else put(c, r, t, 'num');
  });
}
// trend lines
for (let k = 0; k <= 30; k++) put(26 + k, 3 + k, 'B', 'lineB');
put(58, 34, 'B', 'lineB');
for (let k = 0; k < 3; k++) put(74 + k, 24 + k, 'B', 'lineB');
for (let c = 3; c <= 19; c++) put(c, 36 - c, 'H', 'lineH');
for (let c = 21; c <= 25; c++) put(c, 37 - c, 'H', 'lineH');
for (let k = 0; k <= 22; k++) put(51 + k, 57 - k, 'H', 'lineH');

const COLS = 81, FIRST = 9 * 26 + 17; // first visible column, IR
const name = n => String.fromCharCode(64 + Math.floor(n / 26)) + String.fromCharCode(65 + n % 26);
let html = '<colgroup><col style="width:23px"><col style="width:116px"><col style="width:39px">';
for (let c = 0; c < COLS; c++) html += `<col style="width:${c < 74 ? 13 : 12}px">`;
html += '<col></colgroup><thead><tr><th></th><th class="pick">A</th><th class="cb">B</th>';
for (let c = 0; c <= COLS; c++) html += `<th>${name(FIRST + c)}</th>`;
html += '</tr></thead><tbody><tr class="frz"><th>1</th><td></td><td class="cb"></td>' + '<td></td>'.repeat(COLS + 1) + '</tr>';
for (let r = 0; r < 63; r++) {
  const price = 4100 - 50 * r;
  html += `<tr><th>${839 + r}</th><td class="pinkcol">${r === 62 ? 'FW20' : ''}</td><td class="price cb">${price}</td>`;
  for (let c = 0; c < COLS; c++) {
    const m = marks[r + ',' + c];
    html += m ? `<td class="${m[1]}">${m[0]}</td>` : '<td></td>';
  }
  html += `<td class="price">${price}</td></tr>`;
}
html += '<tr><th></th><td class="pinkcol"></td><td class="cb"></td>' + '<td></td>'.repeat(COLS + 1) + '</tr>';
document.getElementById('sheet').innerHTML = html + '</tbody>';
</script>
</body>
</html>
